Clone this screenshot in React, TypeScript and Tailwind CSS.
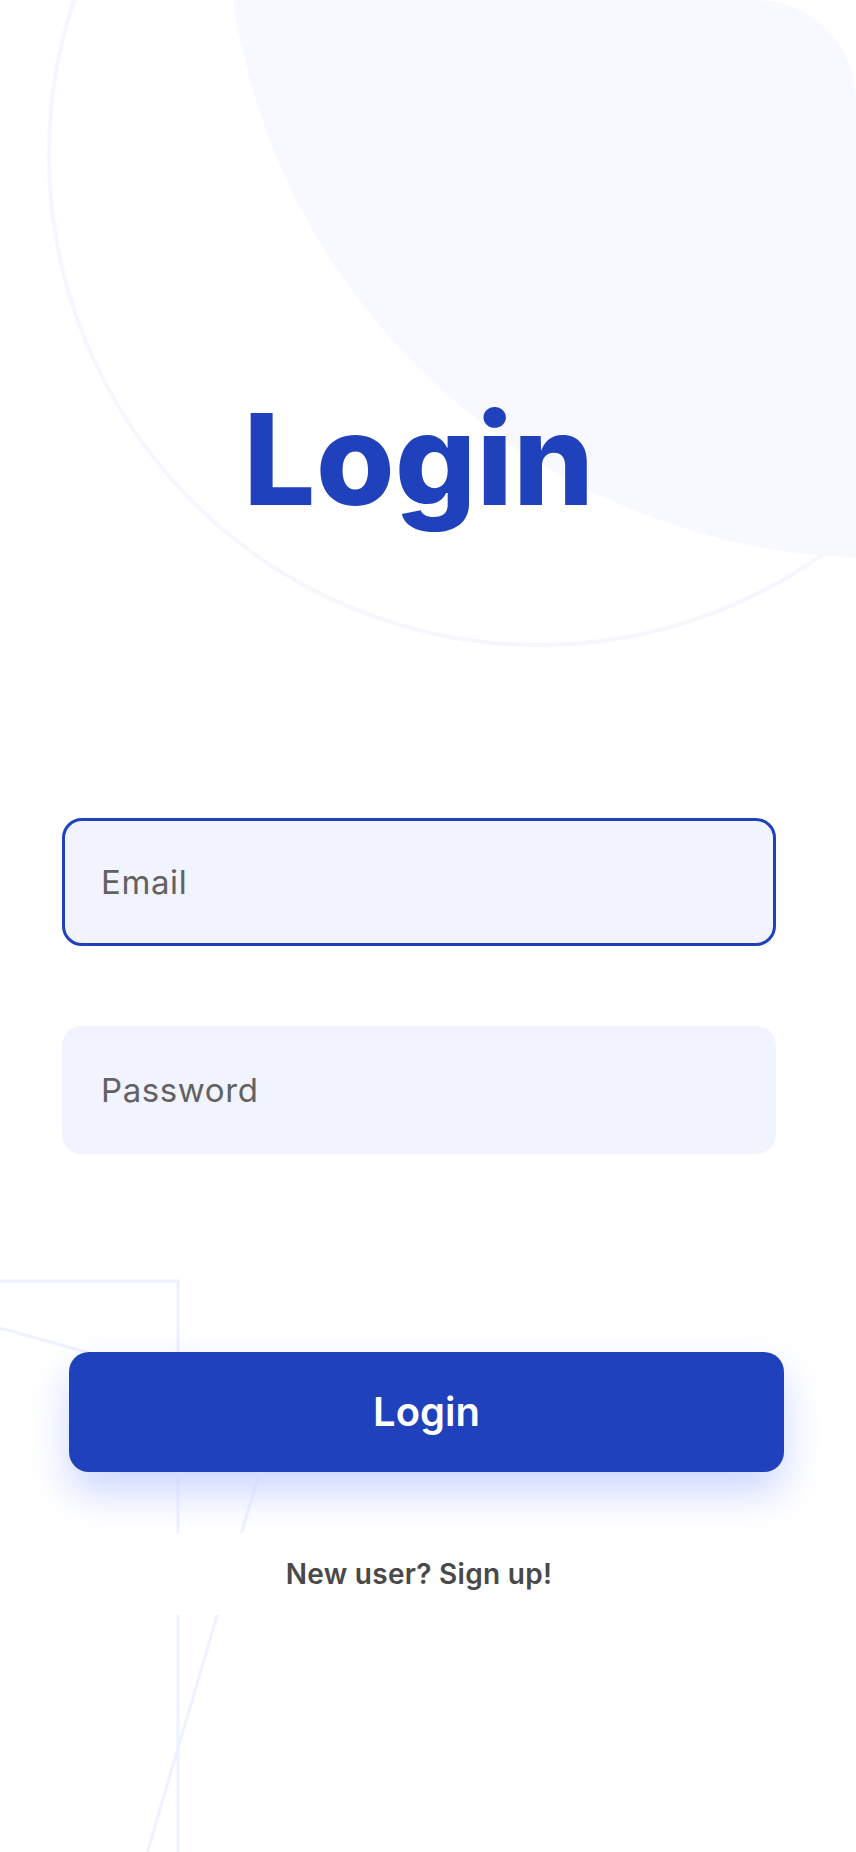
import React from "react";

export default function App() {
  return (
    <div className="relative min-h-[1852px] w-full overflow-hidden bg-white font-[Inter,'Noto_Sans',sans-serif]">
      {/* circle outline */}
      <div className="pointer-events-none absolute left-[47px] top-[-337px] h-[984px] w-[984px] rounded-full border-4 border-[#f6f7fe]" />
      {/* filled decoration, clipped by rounded corner */}
      <div className="pointer-events-none absolute right-0 top-0 h-[558px] w-[623px] overflow-hidden rounded-tr-[100px]">
        <div className="absolute left-[-7px] top-[-748px] h-[1306px] w-[1306px] rounded-full bg-[#F8F9FF]" />
      </div>
      {/* bottom-left line decoration */}
      <svg
        className="pointer-events-none absolute left-0 top-[1260px]"
        width="300"
        height="592"
        viewBox="0 0 300 592"
        fill="none"
      >
        <path d="M0 21 H178 V592" stroke="#EEF1FF" strokeWidth="3" />
        <path d="M0 68 L279 146 L145 600" stroke="#EEF1FF" strokeWidth="3" />
      </svg>

      <div className="relative z-10 flex flex-col pl-[62px] pr-[80px] pt-[396px]">
        <h1 className="h-[127px] text-center text-[127px] font-extrabold leading-none tracking-[0.5px] text-[#1F41BB]">
          Login
        </h1>

        <input
          type="email"
          placeholder="Email"
          className="mt-[295px] h-[128px] w-full rounded-[20px] border-[3px] border-[#1F41BB] bg-[#F1F4FF] pl-[36px] text-[33px] tracking-[0.6px] text-[#494949] outline-none placeholder:text-[#626262]"
        />
        <input
          type="password"
          placeholder="Password"
          className="mt-[80px] h-[128px] w-full rounded-[20px] border-[3px] border-transparent bg-[#F1F4FF] pl-[36px] text-[33px] tracking-[0.6px] text-[#494949] outline-none placeholder:text-[#626262]"
        />

        <button className="ml-[7px] mt-[198px] flex h-[120px] w-[715px] items-center justify-center rounded-[20px] bg-[#1F41BB] text-[40px] font-semibold text-white shadow-[0_20px_40px_#CBD6FF]">
          Login
        </button>

        <div className="mt-[61px] flex h-[82px] w-full items-center justify-center bg-white">
          <span className="text-[28px] font-semibold tracking-[0.3px] text-[#494949]">New user? Sign up!</span>
        </div>
      </div>
    </div>
  );
}
